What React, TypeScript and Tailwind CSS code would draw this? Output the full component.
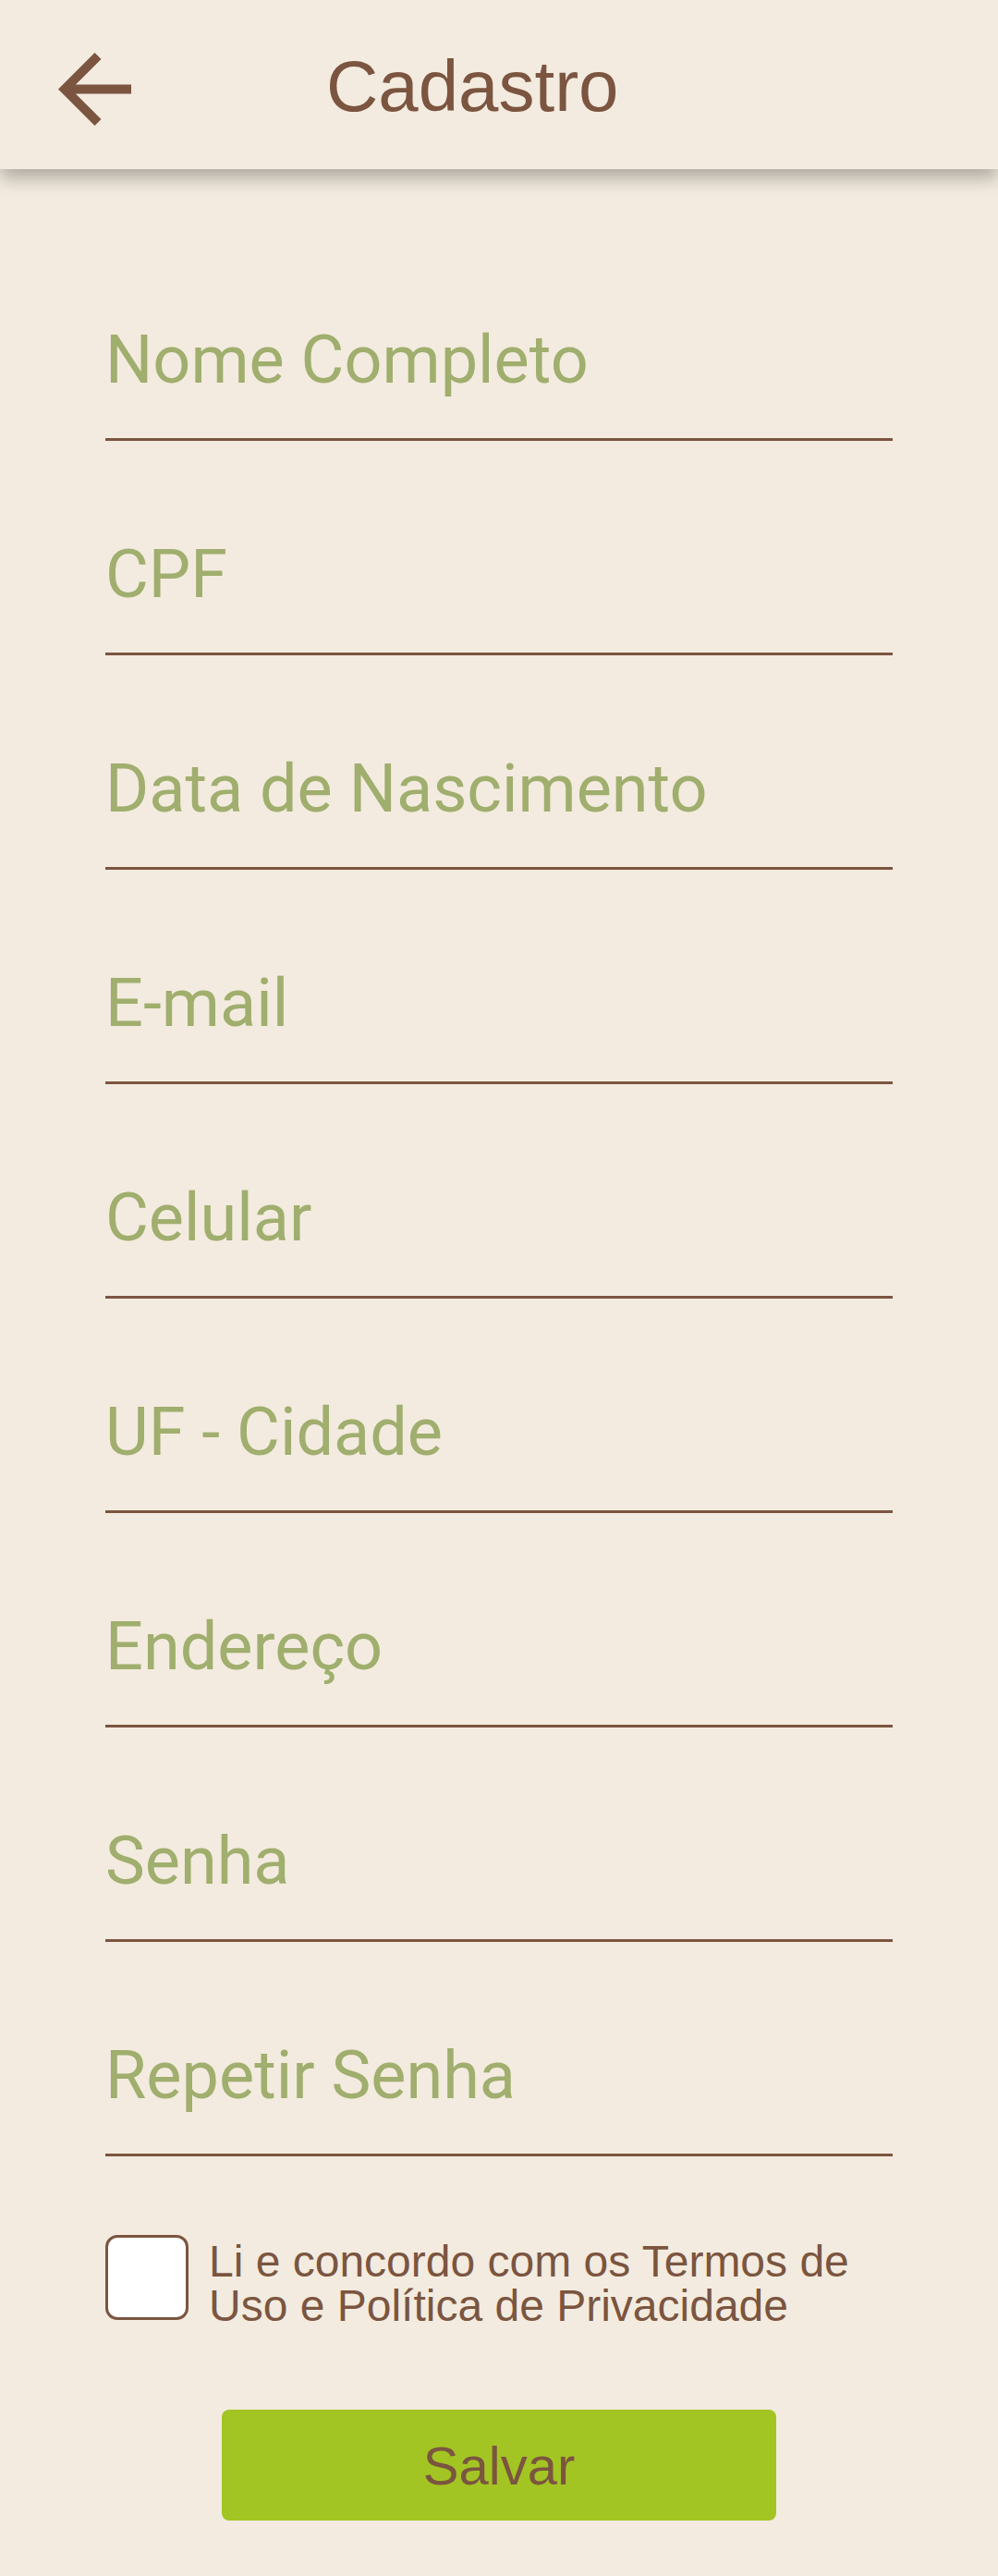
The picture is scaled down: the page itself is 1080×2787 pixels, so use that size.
import React from "react";

const fields = [
  "Nome Completo",
  "CPF",
  "Data de Nascimento",
  "E-mail",
  "Celular",
  "UF - Cidade",
  "Endereço",
  "Senha",
  "Repetir Senha",
];

export default function App() {
  return (
    <div className="w-[1080px] h-[2787px] bg-[#f3ebdf] overflow-hidden">
      <header className="relative z-10 h-[183px] bg-[#f3ebdf] flex items-start shadow-[0_10px_18px_rgba(0,0,0,0.28)]">
        <svg
          className="mt-[57px] ml-[63px] shrink-0"
          width="79"
          height="79"
          viewBox="4 4 16 16"
          fill="#7b5540"
        >
          <path d="M20 11H7.83l5.59-5.59L12 4l-8 8 8 8 1.41-1.41L7.83 13H20v-2z" />
        </svg>
        <h1 className="mt-[49px] ml-[211px] text-[78px] leading-[88px] text-[#7b5540] font-['Liberation_Sans',Arial,sans-serif] font-normal">
          Cadastro
        </h1>
      </header>

      <main className="px-[114px] pt-[62px]">
        {fields.map((f) => (
          <div
            key={f}
            className="h-[232px] flex items-end pb-[41px] border-b-[3px] border-[#7b5540]"
          >
            <div className="text-[72px] leading-[86px] text-[#a0ae6e] font-['Roboto',sans-serif]">
              {f}
            </div>
          </div>
        ))}

        <label className="mt-[85px] flex items-start">
          <span className="block w-[90px] h-[92px] shrink-0 bg-white border-[3px] border-[#7b5540] rounded-[13px]" />
          <span className="ml-[22px] mt-[5px] text-[48px] leading-[48px] text-[#7b5540] font-['Liberation_Sans',Arial,sans-serif]">
            Li e concordo com os Termos de Uso e Política de Privacidade
          </span>
        </label>
      </main>

      <div className="mt-[88px] flex justify-center">
        <button className="w-[600px] h-[120px] rounded-[8px] bg-[#a3c523] text-[58px] text-[#7b5540] font-['Liberation_Sans',Arial,sans-serif] flex items-center justify-center">
          Salvar
        </button>
      </div>
    </div>
  );
}
